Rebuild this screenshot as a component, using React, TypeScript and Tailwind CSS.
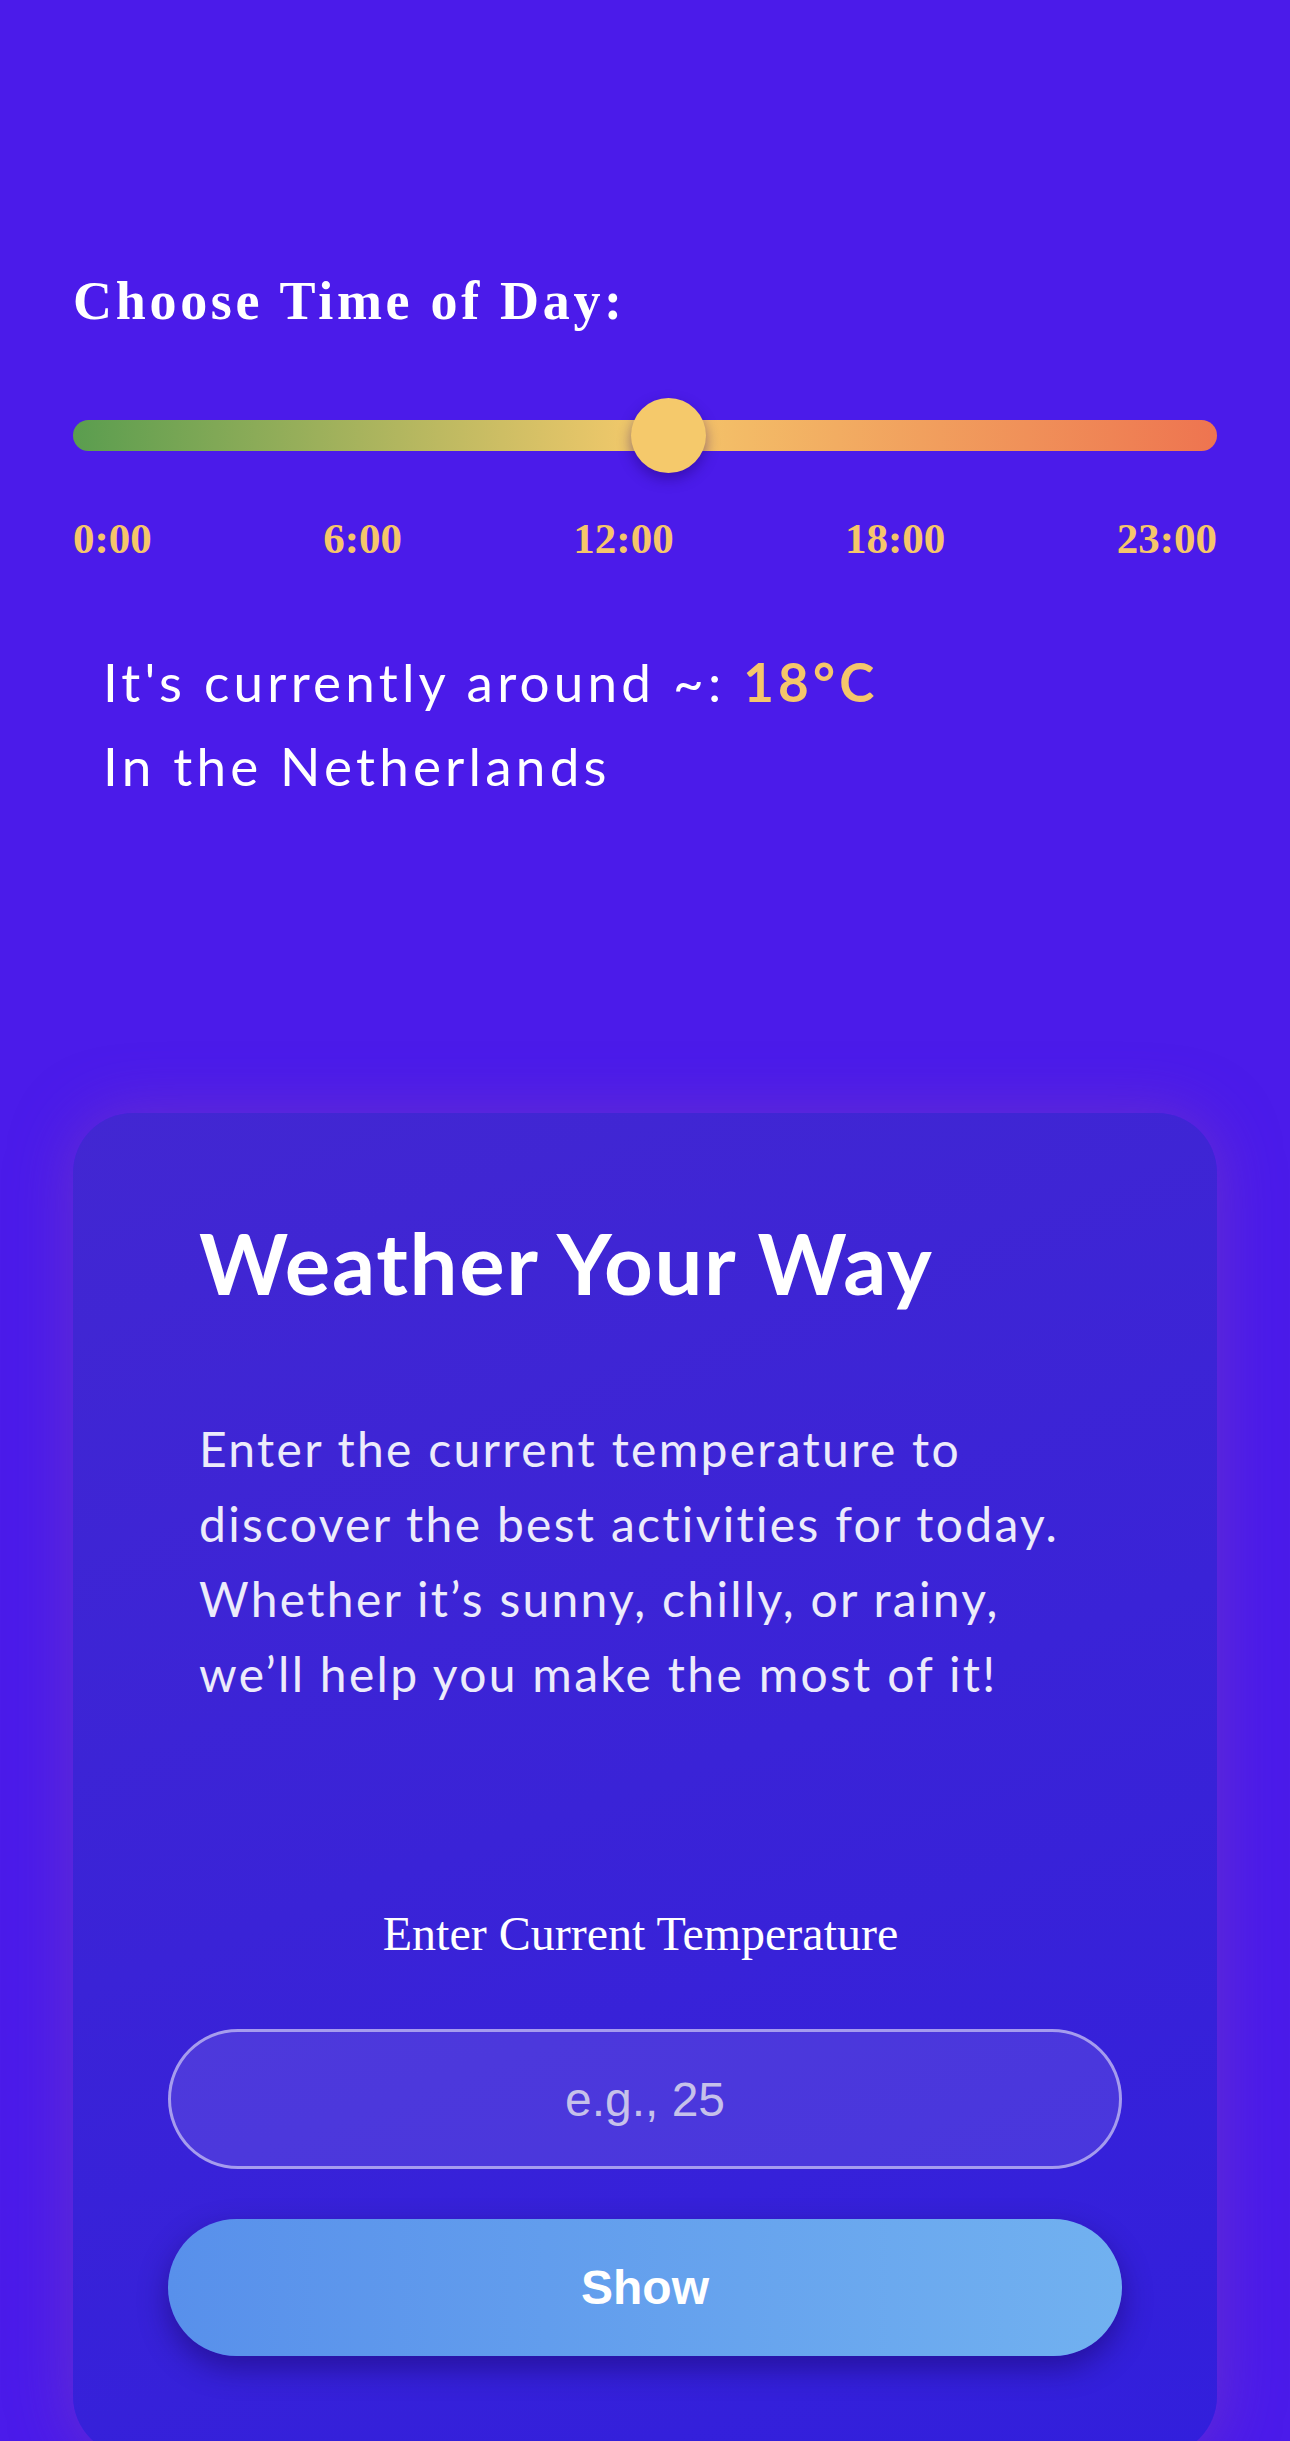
import { useState } from "react"

const hours = ["0:00", "6:00", "12:00", "18:00", "23:00"]

export default function App() {
  const [temp, setTemp] = useState("")

  return (
    <div className="min-h-screen overflow-hidden bg-[#4b1bea] px-[73px] pt-[274px] font-['Lato',sans-serif]">
      <h2 className="font-['Liberation_Serif',serif] text-[54px] font-bold leading-[54px] tracking-[3.7px] text-white">
        Choose Time of Day:
      </h2>

      {/* slider */}
      <div className="relative mt-[70px] flex h-[75px] items-center">
        <div className="h-[31px] w-full rounded-full bg-[linear-gradient(to_right,#5a9d4f,#f4c96b_50%,#ee7450)]" />
        <div className="absolute left-[558px] top-0 h-[75px] w-[75px] rounded-full bg-[#f5c96b] shadow-[0_6px_14px_rgba(30,0,110,0.45)]" />
      </div>

      <div className="mt-[44px] flex justify-between font-['Liberation_Serif',serif] text-[43px] font-bold leading-[43px] text-[#f5c66a]">
        {hours.map((h) => (
          <span key={h}>{h}</span>
        ))}
      </div>

      <div className="mt-[80px] pl-[30px] text-[53px] leading-[84px] tracking-[4.2px] text-white">
        <p>
          It's currently around ~: <span className="font-bold text-[#f5c66a]">18°C</span>
        </p>
        <p>In the Netherlands</p>
      </div>

      {/* card */}
      <div className="mt-[305px] rounded-[60px] bg-[linear-gradient(160deg,#4227d2,#321fdc)] px-[95px] pb-[100px] pt-[98px] shadow-[0_0_60px_rgba(120,60,190,0.6)]">
        <div className="px-[31px]">
          <h1 className="text-[85px] font-bold leading-[102px] tracking-[1.7px] text-white">Weather Your Way</h1>
          <p className="mt-[98px] text-[48px] leading-[75px] tracking-[2.3px] text-[#ecebfb]">
            Enter the current temperature to discover the best activities for today. Whether it’s sunny,
            chilly, or rainy, we’ll help you make the most of it!
          </p>
        </div>

        <label className="mt-[199px] block pr-[9px] text-center font-['Liberation_Serif',serif] text-[48px] leading-[48px] text-white">
          Enter Current Temperature
        </label>
        <input
          value={temp}
          onChange={(e) => setTemp(e.target.value)}
          placeholder="e.g., 25"
          className="mt-[71px] block h-[140px] w-full rounded-full border-[3px] border-white/50 bg-white/10 text-center font-['Liberation_Sans',sans-serif] text-[48px] text-white outline-none placeholder:text-[#c6c1ea]"
        />
        <button className="mt-[50px] block h-[137px] w-full rounded-full bg-[linear-gradient(to_right,#5890eb,#71b1f0)] font-['Liberation_Sans',sans-serif] text-[48px] font-bold text-white shadow-[0_12px_30px_rgba(20,0,80,0.45)]">
          Show
        </button>
      </div>
    </div>
  )
}
